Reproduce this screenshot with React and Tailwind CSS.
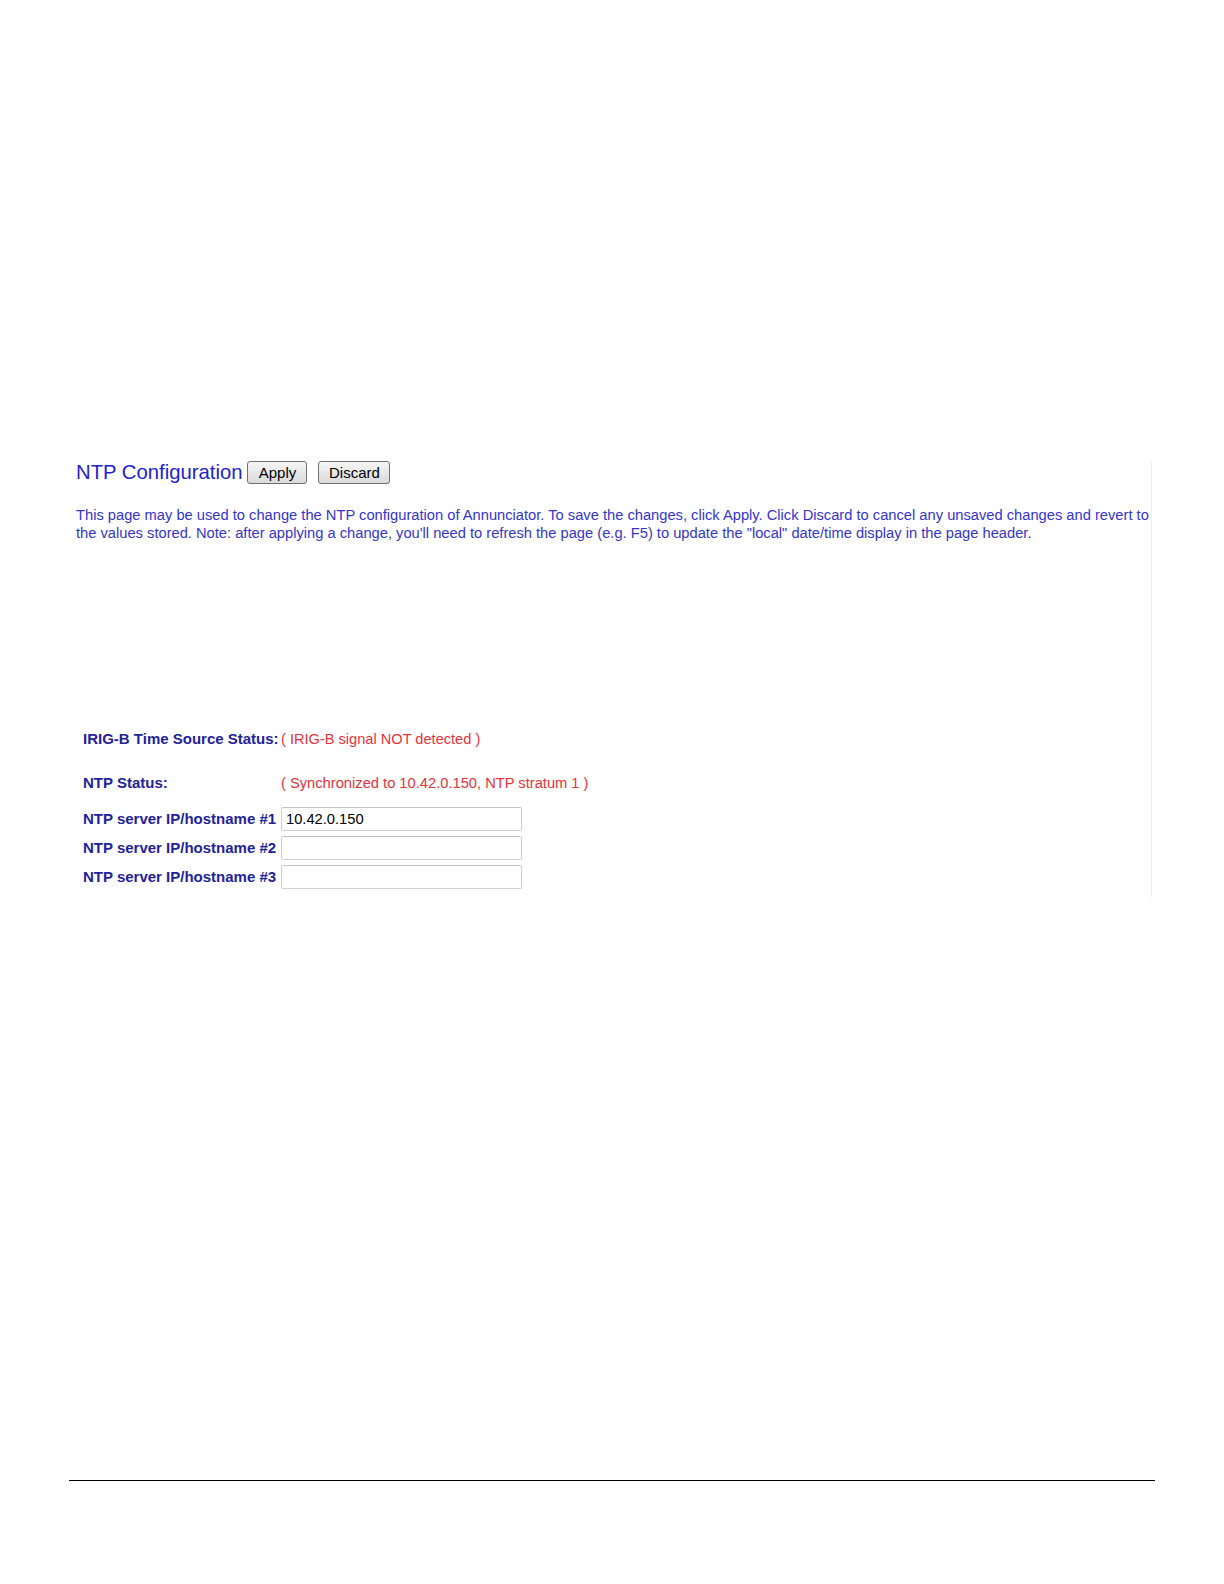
import React from "react";

const rows = [
  { label: "NTP server IP/hostname #1", value: "10.42.0.150" },
  { label: "NTP server IP/hostname #2", value: "" },
  { label: "NTP server IP/hostname #3", value: "" },
];

const Btn = ({ name, w }) => (
  <button
    className={`${w} h-[23px] border border-[#707070] rounded-[3px] bg-gradient-to-b from-[#f6f6f6] to-[#dadada] text-[15px] leading-none text-black`}
  >
    {name}
  </button>
);

const App = () => {
  return (
    <div className="w-[1224px] h-[1584px] bg-white font-['Liberation_Sans',Arial,sans-serif]">
      <div className="pt-[448px] pl-[66px]">
        <div className="w-[1086px] h-[436px] border-r border-[#efefef] pl-[10px]">
          {/* header row */}
          <div className="flex items-center h-[23px] mt-[13px]">
            <h1 className="text-[20.3px] leading-[23px] text-[#2222cc]">NTP Configuration</h1>
            <div className="ml-[5px]">
              <Btn name="Apply" w="w-[60px]" />
            </div>
            <div className="ml-[11px]">
              <Btn name="Discard" w="w-[72px]" />
            </div>
          </div>

          <p className="mt-[22px] text-[14.7px] leading-[18px] text-[#3535cc] whitespace-nowrap">
            This page may be used to change the NTP configuration of Annunciator. To save the changes, click Apply. Click
            Discard to cancel any unsaved changes and revert to
            <br />
            the values stored. Note: after applying a change, you'll need to refresh the page (e.g. F5) to update the
            "local" date/time display in the page header.
          </p>

          {/* status table */}
          <div className="ml-[7px] mt-[187px] grid grid-cols-[198px_auto] items-center">
            <div className="h-[20px] leading-[20px] text-[15px] font-bold text-[#22229a] whitespace-nowrap">
              IRIG-B Time Source Status:
            </div>
            <div className="h-[20px] leading-[20px] text-[14.6px] text-[#e5333a] whitespace-nowrap">
              ( IRIG-B signal NOT detected )
            </div>

            <div className="mt-[24px] h-[20px] leading-[20px] text-[15px] font-bold text-[#22229a]">NTP Status:</div>
            <div className="mt-[24px] h-[20px] leading-[20px] text-[14.7px] text-[#e5333a] whitespace-nowrap">
              ( Synchronized to 10.42.0.150, NTP stratum 1 )
            </div>

            {rows.map((r, i) => (
              <React.Fragment key={i}>
                <div
                  className={`${i === 0 ? "mt-[14px]" : "mt-[5px]"} h-[24px] leading-[24px] text-[15px] font-bold text-[#22229a] whitespace-nowrap`}
                >
                  {r.label}
                </div>
                <div className={`${i === 0 ? "mt-[14px]" : "mt-[5px]"} h-[24px]`}>
                  <input
                    type="text"
                    defaultValue={r.value}
                    className="w-[241px] h-[24px] border border-[#d0d0d0] border-t-[#c4c4c4] rounded-[2px] px-[4px] text-[14.7px] text-black outline-none"
                  />
                </div>
              </React.Fragment>
            ))}
          </div>
        </div>
      </div>

      <div className="mt-[583px] ml-[69px] w-[1086px] h-px bg-black" />
    </div>
  );
};

export default App;
